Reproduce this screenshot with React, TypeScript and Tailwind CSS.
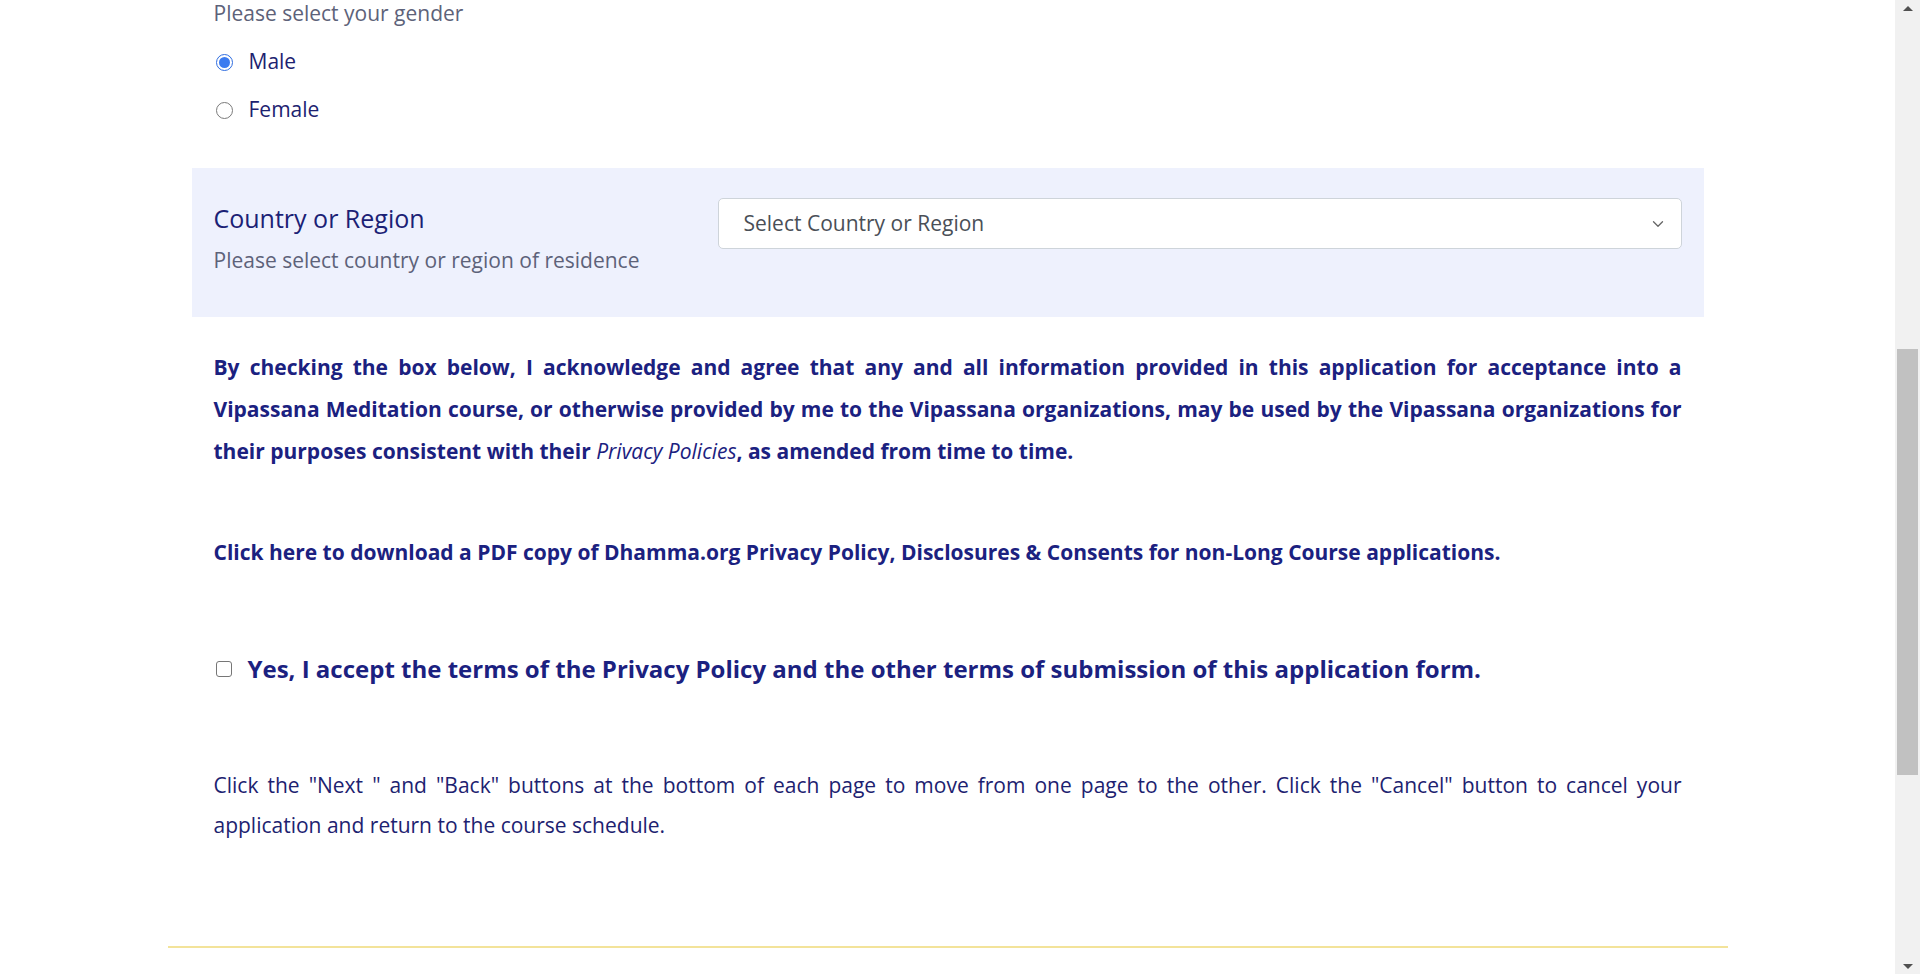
import { ChevronDown } from 'lucide-react';

function Radio({ checked, label }: { checked?: boolean; label: string }) {
  return (
    <label className="flex items-center h-[48px] cursor-pointer">
      {checked ? (
        <span className="ml-[2px] w-[17px] h-[17px] rounded-full border border-[#2f6de0] bg-white flex items-center justify-center">
          <span className="w-[11px] h-[11px] rounded-full bg-[#3b7bf0]" />
        </span>
      ) : (
        <span className="ml-[2px] w-[17px] h-[17px] rounded-full border border-[#7a7a7a] bg-white" />
      )}
      <span className="ml-[16px] text-[21px] text-[#1d2270]">{label}</span>
    </label>
  );
}

export default function App() {
  return (
    <div className="flex w-full h-[974px] overflow-hidden bg-white" style={{ fontFamily: '"Open Sans", "Noto Sans", sans-serif' }}>
      <div className="flex-1 flex justify-center">
        <div className="w-[1560px]">
          <div className="mx-[24px]">
            {/* gender */}
            <div className="px-[22px] -mt-[2px]">
              <p className="text-[21px] leading-[30px] text-[#5d6279]">Please select your gender</p>
              <div className="pt-[10px]">
                <Radio checked label="Male" />
                <Radio label="Female" />
              </div>
            </div>

            {/* country */}
            <div className="mt-[34px] bg-[#eef1fd] px-[22px] pt-[30px] pb-[42px] grid grid-cols-[504px_1fr]">
              <div className="pt-[4px]">
                <h3 className="text-[25px] leading-[32px] font-medium text-[#1b2175]">Country or Region</h3>
                <p className="mt-[11px] text-[21px] leading-[30px] text-[#5d6279]">Please select country or region of residence</p>
              </div>
              <div>
                <div className="h-[51px] bg-white border border-[#ced4da] rounded-[5px] flex items-center justify-between pl-[25px] pr-[14px]">
                  <span className="text-[21px] text-[#4a4f57]">Select Country or Region</span>
                  <ChevronDown className="w-[18px] h-[18px] text-[#666]" strokeWidth={1.75} />
                </div>
              </div>
            </div>

            {/* consent */}
            <div className="px-[22px]">
              <p className="mt-[29px] text-[21px] leading-[42px] font-bold text-[#1b2180] text-justify">
                By checking the box below, I acknowledge and agree that any and all information provided in this application for acceptance into a Vipassana Meditation course, or otherwise provided by me to the Vipassana organizations, may be used by the Vipassana organizations for their purposes consistent with their <i className="font-normal">Privacy Policies</i>, as amended from time to time.
              </p>
              <p className="mt-[59px] text-[21px] leading-[42px] font-bold text-[#1b2180]">
                <a href="#" className="text-[#1b2180]">Click here to download a PDF copy of Dhamma.org Privacy Policy, Disclosures &amp; Consents for non-Long Course applications.</a>
              </p>
              <label className="mt-[75px] flex items-center h-[42px]">
                <span className="ml-[2px] w-[16px] h-[16px] rounded-[3px] border border-[#767676] bg-white" />
                <span className="ml-[16px] text-[24px] font-bold text-[#1b2180]">Yes, I accept the terms of the Privacy Policy and the other terms of submission of this application form.</span>
              </label>
              <p className="mt-[75px] text-[21px] leading-[40px] text-[#1d2270] text-justify">
                Click the "Next " and "Back" buttons at the bottom of each page to move from one page to the other. Click the "Cancel" button to cancel your application and return to the course schedule.
              </p>
            </div>
          </div>
          <div className="mt-[101px] border-t-2 border-[#f3e39a]" />
        </div>
      </div>

      {/* scrollbar */}
      <div className="w-[25px] bg-[#f1f1f1] flex flex-col items-center">
        <div className="h-[16px] flex items-center justify-center">
          <span className="block w-0 h-0 border-l-[5px] border-r-[5px] border-b-[5px] border-l-transparent border-r-transparent border-b-[#505050]" />
        </div>
        <div className="mt-[333px] w-[21px] h-[426px] bg-[#c1c1c1]" />
        <div className="flex-1" />
        <div className="h-[16px] flex items-center justify-center">
          <span className="block w-0 h-0 border-l-[5px] border-r-[5px] border-t-[5px] border-l-transparent border-r-transparent border-t-[#505050]" />
        </div>
      </div>
    </div>
  );
}
